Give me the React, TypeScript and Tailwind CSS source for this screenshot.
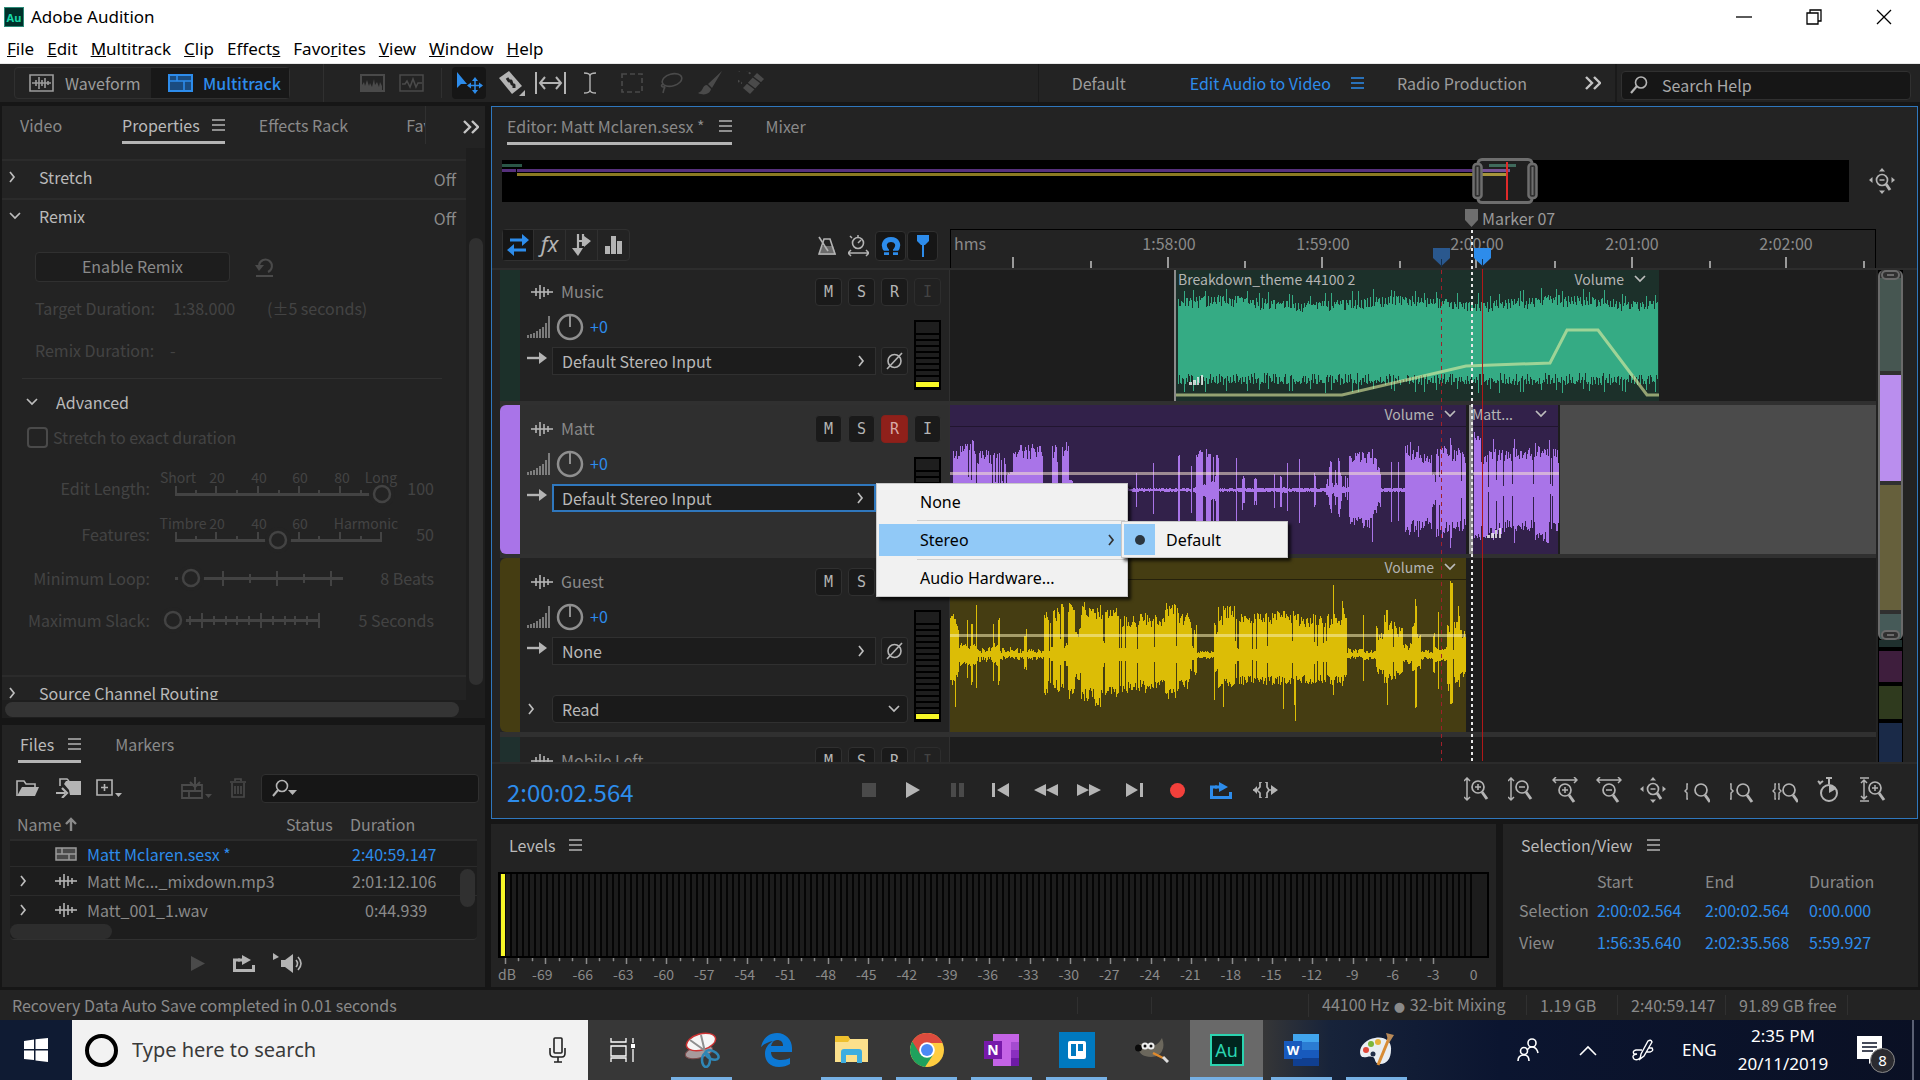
import React from "react";

type Seg = [number, number, number, number, number?, number?];

function rng(seed: number) {
  let s = seed;
  return () => {
    s = (s * 1664525 + 1013904223) % 4294967296;
    return s / 4294967296;
  };
}

/* Builds one vertical stroke per pixel column. A segment is
   [from, to, peak above, peak below, jitter, share of quiet columns]. */
function wavePath(segs: Seg[], mid: number, seed: number) {
  const r = rng(seed);
  let d = "";
  for (const [from, to, up, down, jitter = 0.3, gaps = 0] of segs) {
    for (let x = from; x < to; x++) {
      const quiet = r() < gaps;
      const k = quiet ? 0.15 + r() * 0.2 : 1;
      const a = Math.max(1, Math.round(up * k * (1 - r() * jitter)));
      const b = Math.max(1, Math.round(down * k * (1 - r() * jitter)));
      d += `M${x} ${mid - a}h1v${a + b}h-1z`;
    }
  }
  return d;
}

const violetSegs: Seg[] = [
  [0, 3, 3, 3], [3, 10, 40, 38], [10, 11, 58, 50], [11, 22, 47, 42, 0.2, 0.12], [22, 23, 58, 50], [23, 26, 50, 44],
  [27, 46, 42, 38, 0.4, 0.1], [46, 57, 40, 34, 0.5, 0.15], [57, 63, 20, 20], [63, 64, 52, 48], [64, 70, 42, 38], [70, 71, 56, 50],
  [71, 93, 47, 42, 0.35, 0.06], [93, 102, 2, 2], [102, 106, 45, 40], [106, 107, 57, 48], [107, 108, 40, 40], [109, 112, 3, 3],
  [112, 119, 48, 40], [119, 123, 12, 12], [123, 186, 2, 2, 0.6], [186, 187, 22, 24], [187, 203, 2, 2, 0.6], [203, 204, 28, 26],
  [204, 228, 2, 2, 0.6], [228, 230, 37, 32, 0.1], [230, 241, 2, 2, 0.6], [241, 242, 25, 25], [243, 246, 3, 3],
  [246, 253, 41, 40, 0.2, 0.08], [253, 256, 6, 8], [256, 269, 42, 40, 0.25, 0.08], [269, 286, 2, 2, 0.6], [286, 287, 37, 36],
  [287, 292, 2, 2], [292, 295, 18, 20, 0.4], [295, 304, 2, 2], [304, 307, 15, 17, 0.4], [307, 324, 2, 2], [324, 325, 22, 22],
  [325, 330, 2, 2], [330, 332, 17, 17], [332, 337, 3, 3], [337, 338, 28, 26], [338, 349, 2, 2], [349, 350, 43, 33],
  [350, 364, 2, 2], [364, 366, 18, 18], [366, 376, 2, 2], [376, 391, 32, 28, 0.5, 0.5], [391, 398, 16, 14, 0.5, 0.6],
  [398, 399, 3, 3], [399, 422, 39, 38, 0.3], [422, 423, 49, 63], [423, 427, 36, 28], [427, 431, 24, 20, 0.4],
  [431, 441, 2, 2], [441, 442, 30, 36], [442, 448, 2, 2], [448, 449, 33, 35], [449, 455, 2, 2], [455, 460, 46, 48],
  [460, 461, 50, 51], [461, 468, 40, 42, 0.3, 0.1], [468, 469, 50, 56], [469, 482, 37, 40, 0.3, 0.15], [482, 485, 18, 20],
  [485, 494, 42, 48, 0.2, 0.1], [494, 500, 46, 44, 0.3], [500, 502, 56, 63], [502, 516, 42, 42, 0.35, 0.08],
];

const violetTailSegs: Seg[] = [
  [1, 8, 58, 50, 0.15], [8, 15, 36, 48, 0.3], [15, 16, 3, 3], [16, 20, 42, 48], [20, 21, 60, 62], [21, 28, 42, 46, 0.3, 0.1],
  [28, 41, 44, 46, 0.35, 0.06], [41, 42, 62, 62], [42, 62, 43, 42, 0.3, 0.08], [62, 63, 58, 60], [63, 76, 44, 56, 0.25, 0.05],
  [76, 77, 54, 44], [77, 86, 42, 42, 0.4, 0.12],
];

const amberSegs: Seg[] = [
  [0, 5, 42, 30, 0.2], [5, 6, 38, 58], [6, 9, 36, 28, 0.5], [9, 17, 13, 13, 0.5], [17, 18, 36, 30], [18, 21, 12, 12, 0.5],
  [21, 24, 36, 32, 0.3, 0.3], [24, 26, 12, 12], [26, 27, 53, 42], [27, 43, 8, 7, 0.8], [43, 44, 43, 36], [44, 48, 12, 12, 0.4],
  [48, 50, 42, 32], [50, 74, 8, 5, 0.8], [74, 76, 24, 16], [76, 77, 34, 20], [77, 94, 6, 5, 0.7], [94, 98, 44, 42, 0.2],
  [98, 103, 42, 30, 0.4, 0.3], [103, 107, 46, 34, 0.3], [107, 114, 52, 38, 0.3, 0.1], [114, 118, 12, 12, 0.6],
  [118, 125, 54, 44, 0.25], [125, 131, 30, 25, 0.4], [131, 145, 54, 46, 0.3, 0.1], [145, 146, 52, 70], [146, 150, 50, 50],
  [150, 151, 60, 58], [151, 165, 48, 42, 0.25, 0.12], [165, 170, 50, 44, 0.3, 0.2], [170, 197, 42, 38, 0.35, 0.1],
  [197, 215, 40, 34, 0.3, 0.06], [215, 228, 52, 44, 0.25, 0.08], [228, 240, 42, 34, 0.3, 0.05], [240, 247, 34, 22, 0.4, 0.1],
  [247, 264, 4, 4, 0.6], [264, 265, 44, 52], [265, 268, 30, 20], [268, 269, 64, 34], [269, 273, 40, 36], [273, 274, 62, 52],
  [274, 287, 50, 32, 0.3, 0.08], [287, 289, 8, 8], [289, 310, 42, 30, 0.3, 0.14], [310, 333, 44, 30, 0.3, 0.08],
  [333, 334, 46, 56], [334, 344, 46, 30, 0.3, 0.15], [344, 346, 54, 68], [346, 383, 42, 30, 0.35, 0.12], [383, 384, 75, 48],
  [384, 392, 42, 30, 0.3, 0.1], [392, 394, 54, 32], [394, 397, 44, 26], [397, 413, 7, 4, 0.7], [413, 414, 50, 34],
  [414, 426, 5, 5, 0.7], [426, 431, 34, 20, 0.6, 0.4], [431, 434, 22, 20], [434, 437, 46, 30], [437, 438, 52, 65],
  [438, 446, 34, 26, 0.3, 0.1], [446, 453, 28, 22, 0.4], [453, 462, 12, 9, 0.6], [462, 465, 36, 20, 0.4], [465, 467, 70, 56],
  [467, 471, 22, 14, 0.4], [471, 483, 5, 5, 0.6], [483, 485, 24, 18], [485, 488, 8, 8], [488, 489, 44, 38],
  [489, 497, 8, 7, 0.4], [497, 500, 30, 36], [500, 503, 75, 50, 0.05], [503, 508, 34, 30, 0.4, 0.1], [508, 510, 52, 36],
  [510, 516, 26, 22, 0.5],
];

/* Dense music bed: slow swell with a single taller column now and then. */
const greenSegs: Seg[] = Array.from({ length: 160 }, (_, i): Seg[] => {
  const x = 2 + i * 3;
  const swell = Math.round(3 * Math.sin(i / 9));
  const loud = i % 7 === 2 || i % 11 === 5;
  return [[x, x + 1, (loud ? 53 : 45) + swell, loud ? 50 : 42, 0.08], [x + 1, x + 3, 45 + swell, 41, 0.26]];
}).flat();

/* ---------- icons ---------- */

type IconProps = { w: number; h: number; className?: string; box?: string; children: React.ReactNode };
function Icon({ w, h, className = "", box, children }: IconProps) {
  return (
    <svg width={w} height={h} viewBox={box ?? `0 0 ${w} ${h}`} className={"shrink-0 " + className} fill="none" stroke="currentColor" strokeWidth="2" aria-hidden="true">
      {children}
    </svg>
  );
}

const Burger = ({ className = "text-[#b4b4b4]" }: { className?: string }) => (
  <Icon w={13} h={12} className={className}><path d="M0 1h13M0 6h13M0 11h13" strokeWidth="1.700" /></Icon>
);
const Chevrons = () => (
  <Icon w={16} h={14} className="text-[#c4c4c4]"><path d="M1 1l6 6-6 6M9 1l6 6-6 6" strokeWidth="2.4" /></Icon>
);
const Right = ({ className = "text-[#bdbdbd]" }: { className?: string }) => (
  <Icon w={7} h={12} className={className}><path d="M1 1l4 5-4 5" strokeWidth="1.7" /></Icon>
);
const Down = ({ className = "text-[#bdbdbd]" }: { className?: string }) => (
  <Icon w={12} h={8} className={className}><path d="M1 1l5 5 5-5" strokeWidth="1.7" /></Icon>
);
const WaveGlyph = ({ className = "text-[#b4b4b4]" }: { className?: string }) => (
  <Icon w={22} h={14} className={className}><path d="M0 7h22" strokeWidth="1.600" /><path d="M5 3v8M9 0v14M13 2v10M17 4v6" strokeWidth="1.600" /></Icon>
);
const Glass = () => <><circle cx="14" cy="10" r="6" strokeWidth="1.7" /><path d="M18 15l5 7" strokeWidth="3" /></>;

const ZoomAll = () => (
  <Icon w={26} h={26} className="text-[#b4b4b4]">
    <circle cx="13" cy="12" r="5.5" strokeWidth="1.7" /><path d="M10.500 12h5" strokeWidth="1.5" /><path d="M17 16l4 6" strokeWidth="3" />
    <path d="M13 0l3 3.500h-6zM13 26l3-3.500h-6zM0 12l3.500-3v6zM26 12l-3.500-3v6z" fill="currentColor" stroke="none" />
  </Icon>
);

const zoomIcons: { label: string; el: React.ReactNode }[] = [
  { label: "Zoom in amplitude", el: <><path d="M3 1v22M0 4l3-3 3 3M0 20l3 3 3-3" strokeWidth="1.500" /><Glass /><path d="M11 10h6M14 7v6" strokeWidth="1.500" /></> },
  { label: "Zoom out amplitude", el: <><path d="M3 1v22M0 4l3-3 3 3M0 20l3 3 3-3" strokeWidth="1.500" /><Glass /><path d="M11 10h6" strokeWidth="1.500" /></> },
  { label: "Zoom in time", el: <><path d="M1 3h24M4 0L1 3l3 3M22 0l3 3-3 3" strokeWidth="1.500" /><g transform="translate(-1 3)"><Glass /><path d="M11 10h6M14 7v6" strokeWidth="1.500" /></g></> },
  { label: "Zoom out time", el: <><path d="M1 3h24M4 0L1 3l3 3M22 0l3 3-3 3" strokeWidth="1.500" /><g transform="translate(-1 3)"><Glass /><path d="M11 10h6" strokeWidth="1.500" /></g></> },
  { label: "Zoom out full", el: <><circle cx="13" cy="12" r="5.5" strokeWidth="1.7" /><path d="M10.500 12h5" strokeWidth="1.500" /><path d="M17 16l4 6" strokeWidth="3" /><path d="M13 0l3 3.500h-6zM13 26l3-3.500h-6zM0 12l3.500-3v6zM26 12l-3.500-3v6z" fill="currentColor" stroke="none" /></> },
  { label: "Zoom to in point", el: <><path d="M4 7H3v5l-2 2 2 2v6h1" strokeWidth="1.500" /><g transform="translate(3 3)"><Glass /></g></> },
  { label: "Zoom to out point", el: <><path d="M2 7h1v5l2 2-2 2v6H2" strokeWidth="1.500" /><g transform="translate(1 3)"><Glass /></g></> },
  { label: "Zoom to selection", el: <><path d="M4 7H3v5l-2 2 2 2v6h1M6 7h1v5l2 2-2 2v6H6" strokeWidth="1.400" /><g transform="translate(3 3)"><Glass /></g></> },
  { label: "Zoom duration", el: <><circle cx="13" cy="16" r="8" strokeWidth="2" /><path d="M13 7V2M10 1h6M5 7L2 4M3 7l4-3" /><path d="M13 16V8a8 8 0 0 1 7 4z" fill="currentColor" stroke="none" /></> },
  { label: "Zoom all tracks", el: <><path d="M0 1h9M0 24h9M4 3v19M1 6l3-3 3 3M1 19l3 3 3-3" strokeWidth="1.500" /><g transform="translate(1 1)"><Glass /><path d="M11 10h6M14 7v6" strokeWidth="1.500" /></g></> },
];

/* ---------- window title, menu and tools ---------- */

function TitleBar() {
  return (
    <header className="bg-white text-black font-['Noto_Sans',sans-serif]">
      <div className="flex h-[34px] items-center pl-1">
        <span className="flex h-5 w-5 items-center justify-center bg-[#00302a] border border-[#2b8b78] text-[11px] font-bold leading-none text-[#19d8a7]">Au</span>
        <h1 className="ml-[7px] text-[17px] leading-6">Adobe Audition</h1>
        <div className="ml-auto flex items-center gap-[54px] pr-[28px]">
          <button aria-label="Minimize"><Icon w={16} h={16}><path d="M0 8h16" strokeWidth="1.300" /></Icon></button>
          <button aria-label="Restore"><Icon w={16} h={16}><path d="M1 4h11v11H1zM4 4V1h11v11h-3" strokeWidth="1.300" /></Icon></button>
          <button aria-label="Close"><Icon w={16} h={16}><path d="M1 1l14 14M15 1L1 15" strokeWidth="1.300" /></Icon></button>
        </div>
      </div>
      <nav className="flex h-[30px] items-center gap-[13px] border-b border-[#e8e8e8] pl-[7px] text-[17px] leading-6">
        <button><u>F</u>ile</button>
        <button><u>E</u>dit</button>
        <button><u>M</u>ultitrack</button>
        <button><u>C</u>lip</button>
        <button>Effect<u>s</u></button>
        <button>Favo<u>r</u>ites</button>
        <button><u>V</u>iew</button>
        <button><u>W</u>indow</button>
        <button><u>H</u>elp</button>
      </nav>
    </header>
  );
}

function Toolbar() {
  return (
    <div className="flex h-[38px] shrink-0 items-center bg-[#232323] pl-[14px] pr-[9px]">
      <div className="flex h-8 items-center rounded-sm border border-[#303030]">
        <button className="flex h-full w-[136px] items-center gap-[11px] pl-[14px] text-[#9c9c9c]">
          <Icon w={25} h={18}><path d="M1 1h23v16H1zM3 9h19M7 6v6M10 3v12M13 6v6M16 4v10M19 7v4" strokeWidth="1.6" /></Icon>
          Waveform
        </button>
        <button className="flex h-full w-[138px] items-center gap-[10px] bg-[#181818] pl-[17px] font-medium text-[#2d8ceb]">
          <Icon w={25} h={18}><path d="M1 1h23v16H1z" fill="#1a4c80" /><path d="M1 7h23M9 1v6M16 7v10" strokeWidth="1.6" /></Icon>
          Multitrack
        </button>
      </div>
      <div className="ml-[33px] h-full w-px bg-[#303030]" />
      <div className="ml-[36px] flex items-center gap-[14px] text-[#4a4a4a]">
        <Icon w={25} h={18}><path d="M1 1h23v16H1z" /><path d="M2 16V11l2-3 1 4 2-6 2 6 1-3 2 4 2-8 1 6 2-3 2 5 1-5 2 4v4z" fill="currentColor" stroke="none" /></Icon>
        <Icon w={25} h={18}><path d="M1 1h23v16H1z" strokeWidth="1.500" /><path d="M3 10h3l2-3 3 6 3-8 3 8 2-4h4" strokeWidth="1.600" /></Icon>
      </div>
      <div className="ml-[17px] h-[30px] w-px bg-[#303030]" />
      <button aria-label="Move tool" className="ml-[10px] flex h-8 w-[34px] items-center justify-center rounded-sm bg-[#161616] text-[#2d8ceb]">
        <Icon w={27} h={24}><path d="M1 1v16l4-4 6 0z" fill="currentColor" stroke="none" /><path d="M19 8v13M12.500 14.500h13" strokeWidth="1.500" /><path d="M19 6l3 4h-6zM19 23l3-4h-6zM11 14.500l4-3v6zM27 14.500l-4-3v6z" fill="currentColor" stroke="none" /></Icon>
      </button>
      <div className="ml-3 flex items-center text-[#b4b4b4]">
        <button aria-label="Razor tool"><Icon w={27} h={26}><path d="M1 8l10-7 13 15-10 8z" fill="currentColor" stroke="none" /><path d="M9 8l2 3 2 0 1 3 2 1 0 3" stroke="#232323" strokeWidth="3" strokeLinejoin="round" /><path d="M27 20v6h-6z" fill="currentColor" stroke="none" /></Icon></button>
        <button aria-label="Slip tool" className="ml-[10px]"><Icon w={31} h={22}><path d="M1 0v22M30 0v22" /><path d="M5 11h21M10 5l-5 6 5 6M21 5l5 6-5 6" /></Icon></button>
        <button aria-label="Time selection tool" className="ml-[18px]"><Icon w={12} h={22}><path d="M0 1q6 0 6 3v14q0 3-6 3M12 1q-6 0-6 3v14q0 3 6 3" strokeWidth="1.400" /></Icon></button>
      </div>
      <div className="ml-[25px] flex items-center gap-[15px] text-[#4a4a4a]">
        <Icon w={22} h={20}><path d="M1 1h20v18H1z" strokeDasharray="5 3" strokeWidth="1.600" /></Icon>
        <Icon w={25} h={22}><ellipse cx="14" cy="8" rx="10" ry="6" transform="rotate(-15 14 8)" strokeWidth="1.600" /><path d="M5 12q-3 2 0 3 3-1 1 2l-1 4" strokeWidth="1.600" /></Icon>
        <Icon w={25} h={24}><path d="M24 0L10 13l4 4L24 0zM9 14c-5 0-3 6-9 8 6 3 12 1 13-4z" fill="currentColor" stroke="none" /></Icon>
        <Icon w={27} h={24}><path d="M5 17L19 2l7 6-14 15z" fill="currentColor" stroke="none" /><path d="M9 12l8 6M15 6l8 6" stroke="#232323" strokeWidth="1.500" /><path d="M12 3A7 7 0 1 0 4 12" strokeDasharray="2 2" /></Icon>
      </div>
      <div className="ml-auto flex h-full items-center border-l border-[#1a1a1a] pl-[33px] text-[#9c9c9c]">
        <button className="w-[118px] text-left">Default</button>
        <button className="text-[#2d8ceb]">Edit Audio to Video</button>
        <button aria-label="Workspace menu" className="ml-[20px]"><Burger className="text-[#2d8ceb]" /></button>
        <button className="ml-[33px]">Radio Production</button>
        <button aria-label="More workspaces" className="ml-[58px]"><Chevrons /></button>
      </div>
      <div className="ml-[14px] h-full w-[2px] bg-[#1a1a1a]" />
      <label className="mt-1 ml-1 flex h-[29px] w-[290px] items-center gap-[14px] rounded-sm border border-[#303030] bg-[#161616] pl-2">
        <Icon w={18} h={18} className="text-[#b4b4b4]"><circle cx="11" cy="6.500" r="5.500" strokeWidth="1.600" /><path d="M7 10l-6 7" strokeWidth="2.200" /></Icon>
        <input aria-label="Search Help" placeholder="Search Help" className="w-full bg-transparent outline-none placeholder:text-[#a8a8a8]" />
      </label>
    </div>
  );
}

/* ---------- properties panel ---------- */

type SliderProps = { label: string; value: string; width: number; pos: number; major: number[]; minor: number[]; names?: [string, number][]; pad?: string; cross?: boolean };
function Slider({ label, value, width, pos, major, minor, names, pad = "ml-[25px]", cross }: SliderProps) {
  return (
    <label className="flex h-[42px] items-center">
      <span className="w-[148px] text-right">{label}</span>
      <span className={"relative flex h-[42px] items-center " + pad}>
        <svg width={width + 10} height="42" className="overflow-visible" fill="none" stroke="#434343" aria-hidden="true">
          <path d={`M0 ${names ? 27.5 : 21.5}h${width}`} strokeWidth="3" />
          {major.map((x) => <path key={x} d={cross ? `M${x} 14v15` : `M${x} 19v9`} strokeWidth="2" />)}
          {minor.map((x) => <path key={x} d={cross ? `M${x} 17v9` : `M${x} 23v4`} strokeWidth="2" />)}
          <circle cx={pos} cy={names ? 27 : 21} r="13" fill="#232323" stroke="none" />
          {names?.map(([t, x]) => <text key={t} x={x} y="16" textAnchor="middle" fontSize="14" fill="#434343" stroke="none">{t}</text>)}
          <circle cx={pos} cy={names ? 27 : 21} r="8" strokeWidth="2.500" />
        </svg>
        <input type="range" disabled min="0" max={width} defaultValue={pos} className="absolute inset-0 w-full opacity-0" />
      </span>
      <span className="ml-auto text-right">{value}</span>
    </label>
  );
}

function Tab({ children, className = "" }: { children: React.ReactNode; className?: string }) {
  return <button className={"flex h-[38px] shrink-0 items-center border-b-3 border-transparent pt-[3px] whitespace-nowrap " + className}>{children}</button>;
}

function Section({ title, open, off, className = "" }: { title: string; open?: boolean; off?: boolean; className?: string }) {
  return (
    <div className={"flex shrink-0 items-start border-t-2 border-[#2b2b2b] pt-[4px] pl-[7px] pr-[10px] leading-6 " + className}>
      <span className="flex h-6 w-[30px] items-center">{open ? <Down /> : <Right />}</span>
      <span className="text-[#bababa]">{title}</span>
      {off && <span className="ml-auto pt-[2px] text-[#8a8a8a]">Off</span>}
    </div>
  );
}

function Properties() {
  return (
    <section className="relative flex h-[612px] shrink-0 flex-col overflow-hidden bg-[#232323]">
      <div className="flex h-[42px] shrink-0 items-start pl-[18px] text-[#8a8a8a]">
        <Tab>Video</Tab>
        <Tab className="ml-[60px] gap-3 border-b-[#b4b4b4]! text-[#bababa]">Properties <Burger /></Tab>
        <Tab className="ml-[34px]">Effects Rack</Tab>
        <div className="ml-[58px] w-5 shrink-0 overflow-hidden border-r border-[#303030]"><Tab>Favorites</Tab></div>
        <button aria-label="More panels" className="mt-[14px] ml-[37px]"><Chevrons /></button>
      </div>
      <div className="flex min-h-0 flex-1">
        <div className="flex min-w-0 flex-1 flex-col overflow-hidden">
          <div className="h-[11px] shrink-0" />
          <Section title="Stretch" off className="h-[39px]" />
          <Section title="Remix" open off className="h-[41px]" />
          <div className="shrink-0 pl-[33px] pr-[31px] text-[#434343]">
            <div className="flex items-center pt-[13px]">
              <button className="h-[30px] w-[195px] rounded-sm border border-[#303030] bg-[#1d1d1d] pb-[2px] text-[#8a8a8a]">Enable Remix</button>
              <Icon w={20} h={20} className="ml-[25px] text-[#4a4a4a]"><path d="M4 8a6.500 6.500 0 1 1 9 7M1 19h17" /><path d="M0 8h9l-5 6z" fill="currentColor" stroke="none" /></Icon>
            </div>
            <div className="mt-[5px] flex h-[42px] items-center"><span className="w-[138px]">Target Duration:</span><span className="w-[94px]">1:38.000</span><span>(±5 seconds)</span></div>
            <div className="flex h-[42px] items-center"><span className="w-[135px]">Remix Duration:</span><span>-</span></div>
          </div>
          <div className="ml-5 mr-6 mt-[7px] shrink-0 border-t border-[#303030] text-[#434343]">
            <div className="mt-[11px] flex h-6 items-center gap-[18px] pl-1 text-[#bababa]"><Down /> Advanced</div>
            <label className="mt-[11px] flex h-6 items-center gap-[5px] pl-[5px]">
              <input type="checkbox" disabled className="h-[21px] w-[21px] appearance-none rounded-sm border-2 border-[#4a4a4a]" />
              Stretch to exact duration
            </label>
          </div>
          <div className="mt-[18px] shrink-0 pr-[32px] text-[#434343]">
            <Slider label="Edit Length:" value="100" width={207} pos={207} major={[1, 41, 83, 124, 165]} minor={[21, 62, 104, 144, 186]} names={[["Short", 3], ["20", 42], ["40", 84], ["60", 125], ["80", 167], ["Long", 206]]} />
            <div className="h-[4px]" />
            <Slider label="Features:" value="50" width={207} pos={103} major={[1, 41, 83, 124, 165, 206]} minor={[21, 62, 144, 186]} names={[["Timbre", 8], ["20", 42], ["40", 84], ["60", 125], ["Harmonic", 191]]} />
            <div className="h-[2px]" />
            <Slider label="Minimum Loop:" value="8 Beats" width={168} pos={16} major={[48, 102, 156]} minor={[75, 129]} cross />
            <Slider label="Maximum Slack:" value="5 Seconds" width={146} pos={0} major={[29, 88, 146]} minor={[17, 41, 53, 64, 76, 100, 112, 122, 134]} pad="ml-[23px]" cross />
          </div>
          <Section title="Source Channel Routing" className="mt-[34px] h-[38px]" />
        </div>
        <div className="w-[19px] bg-[#1e1e1e] pt-[90px]"><div className="ml-[3px] h-[447px] w-[14px] rounded-full bg-[#303030]" /></div>
      </div>
      <div className="h-[18px] shrink-0 bg-[#1e1e1e] pl-[3px] pt-[2px]"><div className="h-[15px] w-[454px] rounded-full bg-[#343434]" /></div>
    </section>
  );
}

/* ---------- files panel ---------- */

const SessionIcon = () => (
  <Icon w={22} h={14} className="text-[#9a9a9a]"><path d="M1 1h20v12H1z" fill="#4a4a4a" strokeWidth="1.500" /><path d="M1 7h20M7 1v6M14 7v6" strokeWidth="1.500" /></Icon>
);

function Files() {
  return (
    <section className="flex h-[262px] shrink-0 flex-col bg-[#232323] px-2">
      <div className="flex h-[39px] items-start pl-2 text-[#8a8a8a]">
        <Tab className="gap-[14px] border-b-[#b4b4b4]! pl-[2px] text-[#bababa]">Files <Burger /></Tab>
        <Tab className="ml-[34px]">Markers</Tab>
      </div>
      <div className="-mr-[2px] flex h-[48px] items-center pl-[6px] text-[#b4b4b4]">
        <button aria-label="Open file"><Icon w={23} h={17}><path d="M1 16V1h7l2 3h9v4" strokeWidth="1.600" /><path d="M1 16L6 7h17l-4 9z" fill="currentColor" stroke="none" /></Icon></button>
        <button aria-label="Import file" className="ml-[17px]"><Icon w={25} h={20}><path d="M4 8V1h7l2 2" strokeWidth="1.600" /><path d="M10 3h15v14H14l-1-5-5-6z" fill="currentColor" stroke="none" /><path d="M0 15h9M6 10l5 5-5 5" strokeWidth="2.200" /></Icon></button>
        <button aria-label="New file" className="ml-[15px]"><Icon w={26} h={19}><path d="M1 1h15v15H1zM8.500 5v7M5 8.500h7" strokeWidth="1.600" /><path d="M19 14h7l-3.500 4z" fill="currentColor" stroke="none" /></Icon></button>
        <button aria-label="Insert into multitrack" className="ml-[59px] text-[#4a4a4a]"><Icon w={31} h={22}><path d="M1 8h20v13H1zM1 14h20M8 14v7M14 8v6" strokeWidth="1.800" /><path d="M14 0v8M9 5l5 5 5-5" /><path d="M24 17h7l-3.500 4z" fill="currentColor" stroke="none" /></Icon></button>
        <button aria-label="Delete" className="ml-[18px] text-[#4a4a4a]"><Icon w={16} h={20}><path d="M0 4h16M5 3V1h6v2M2 5v14h12V5M5 8v8M8 8v8M11 8v8" strokeWidth="1.600" /></Icon></button>
        <label className="ml-[15px] flex h-[29px] flex-1 items-center rounded-sm border border-[#303030] bg-[#161616] pl-[10px]">
          <Icon w={25} h={18}><circle cx="10" cy="7" r="5.500" strokeWidth="1.600" /><path d="M6 11l-5 6" /><path d="M16 11h9l-4.500 5z" fill="currentColor" stroke="none" /></Icon>
          <input aria-label="Search files" className="w-full bg-transparent outline-none" />
        </label>
      </div>
      <div className="relative h-[127px]">
        <table className="w-full table-fixed border-separate border-spacing-0 text-[#8a8a8a]">
          <colgroup><col className="w-[76px]" /><col /><col className="w-[63px]" /><col className="w-[133px]" /></colgroup>
          <thead>
            <tr className="h-[27px] text-left">
              <th colSpan={2} className="pb-[3px] pl-[7px] font-normal"><span className="flex items-center gap-1">Name <Icon w={12} h={14}><path d="M6 14V2M1 7l5-5 5 5" strokeWidth="2.400" /></Icon></span></th>
              <th className="pb-[3px] pl-[5px] font-normal">Status</th>
              <th className="pb-[3px] pl-[6px] font-normal">Duration</th>
            </tr>
          </thead>
          <tbody className="bg-[#1d1d1d]">
            <tr className="h-[28px] text-[#2d8ceb]">
              <td className="border-t-2 border-b border-[#2b2b2b]"><span className="flex pl-[45px]"><SessionIcon /></span></td>
              <td colSpan={2} className="border-t-2 border-b border-[#2b2b2b] pl-px">Matt Mclaren.sesx *</td>
              <td className="border-t-2 border-b border-[#2b2b2b] pl-2">2:40:59.147</td>
            </tr>
            <tr className="h-[29px]">
              <td className="border-b border-[#2b2b2b]"><span className="flex items-center gap-[28px] pl-[10px]"><Right /><WaveGlyph /></span></td>
              <td colSpan={2} className="border-b border-[#2b2b2b] pl-px">Matt Mc..._mixdown.mp3</td>
              <td className="border-b border-[#2b2b2b] pl-2">2:01:12.106</td>
            </tr>
            <tr className="h-[28px]">
              <td><span className="flex items-center gap-[28px] pl-[10px]"><Right /><WaveGlyph /></span></td>
              <td colSpan={2} className="pl-px">Matt_001_1.wav</td>
              <td className="pl-[21px]">0:44.939</td>
            </tr>
          </tbody>
        </table>
        <div className="h-[16px] rounded-b-sm border-b border-[#303030] bg-[#1d1d1d]"><div className="h-[15px] w-[102px] rounded-full bg-[#2d2d2d]" /></div>
        <div className="absolute right-[2px] top-[57px] h-[38px] w-[15px] rounded-full bg-[#303030]" />
      </div>
      <div className="flex flex-1 items-center pl-[181px] text-[#b4b4b4]">
        <button aria-label="Play" className="text-[#4a4a4a]"><Icon w={14} h={15}><path d="M0 0l14 7.500L0 15z" fill="currentColor" stroke="none" /></Icon></button>
        <button aria-label="Loop playback" className="ml-[28px]"><Icon w={22} h={17}><path d="M7 5H1.500v10.500h19V10" strokeWidth="3" /><path d="M9 0l9 5-9 5z" fill="currentColor" stroke="none" /><path d="M5 5h7" strokeWidth="3" /></Icon></button>
        <button aria-label="Auto-play" className="ml-[18px]"><Icon w={32} h={20}><path d="M0 0l6 4-6 3zM8 7h4l8-6v19l-8-6H8z" fill="currentColor" stroke="none" /><path d="M23 7q3 3.500 0 7M25 4q6 6.500 0 13" strokeWidth="1.600" /></Icon></button>
      </div>
    </section>
  );
}

/* ---------- editor ---------- */

function KeyBtn({ k, off, hot }: { k: string; off?: boolean; hot?: boolean }) {
  return (
    <button className={"h-[28px] w-[27px] rounded-[4px] border text-[15px] leading-none font-['DejaVu_Sans_Mono',monospace] " + (hot ? "border-[#86201b] bg-[#8f201a] text-[#d8a9a6]" : off ? "border-[#2d2d2d] bg-[#212121] text-[#434343]" : "border-[#303030] bg-[#1a1a1a] text-[#b4b4b4]")}>{k}</button>
  );
}

function Meter({ h, lit = true }: { h: number; lit?: boolean }) {
  const rows = Math.floor((h - 18) / 6);
  return (
    <svg width="27" height={h} aria-hidden="true">
      <path d={`M0 0h27v${h}H0z`} fill="#000" />
      <path d={`M2 2h23v11H2z` + Array.from({ length: rows }, (_, i) => `M2 ${15 + i * 6}h23v4H2z`).join("")} fill="#1e1e1e" />
      {lit && <path d={`M2 ${h - 8}h23v5H2z`} fill="#f7f727" />}
    </svg>
  );
}

type TrackProps = { name: string; stripe: string; input: string; height: string; meter: number; active?: boolean; read?: boolean; first?: boolean; phase?: boolean };
function TrackHeader({ name, stripe, input, height, meter, active, read, first, phase = true }: TrackProps) {
  return (
    <div className={"flex w-[450px] shrink-0 overflow-hidden border-r border-[#303030] " + height + (active ? " bg-[#2f2f2f]" : " bg-[#232323]")}>
      <div className={"w-[20px] shrink-0 " + stripe} />
      <div className={"flex-1 pl-[7px] pr-[8px] " + (first ? "pt-[8px]" : "pt-[10px]")}>
        <div className="flex h-[28px] items-center">
          <WaveGlyph className="ml-1 text-[#b4b4b4]" />
          <span className="ml-2 pb-[2px] text-[#8a8a8a]">{name}</span>
          <div className="ml-auto flex gap-[6px]">
            <KeyBtn k="M" /><KeyBtn k="S" /><KeyBtn k="R" hot={active} /><KeyBtn k="I" off={!active} />
          </div>
        </div>
        <div className="flex">
          <div className="flex-1">
            <div className="mt-[7px] flex h-[28px] items-center">
              <Icon w={24} h={22} className="text-[#a0a0a0]"><path d="M1 22v-3M4 22v-4M7 22v-5M10 22v-7M13 22v-9M16 22V11M19 22V7M22 22V0" strokeWidth="1.400" /></Icon>
              <Icon w={28} h={28} className="ml-[5px] text-[#8f8f8f]"><circle cx="14" cy="14" r="12" strokeWidth="2.500" /><path d="M14 3v11" /></Icon>
              <button className="ml-[6px] pb-[2px] text-[#2d8ceb]">+0</button>
            </div>
            <div className="mt-[6px] flex items-center">
              <Icon w={20} h={12} className="mb-[6px] text-[#b4b4b4]"><path d="M0 6h13" strokeWidth="2.400" /><path d="M12 0l8 6-8 6z" fill="currentColor" stroke="none" /></Icon>
              <button className={"ml-[5px] flex h-[28px] w-[324px] items-center justify-between border bg-[#1c1c1c] pr-[10px] pb-px text-[#b8b8b8] " + (active ? "border-2 border-[#2f77bd] pl-2" : "border-[#303030] pl-[9px]")}>{input}<Right /></button>
              {phase && <button aria-label="Phase" className="ml-[5px] flex h-[28px] w-[27px] items-center justify-center rounded-[3px] border border-[#303030] bg-[#1d1d1d]"><Icon w={17} h={18} className="text-[#b4b4b4]"><circle cx="8.500" cy="9" r="6.500" strokeWidth="1.600" /><path d="M1 17L16 1" strokeWidth="1.600" /></Icon></button>}
            </div>
            {read && (
              <div className="mt-[30px] flex items-center">
                <span className="ml-px w-[24px]"><Right /></span>
                <button className="flex h-[28px] w-[356px] items-center justify-between rounded-sm border border-[#303030] bg-[#1a1a1a] pr-[7px] pb-px pl-[9px] text-[#b8b8b8]">Read<Down /></button>
              </div>
            )}
          </div>
          <div className="mt-[14px]"><Meter h={meter} lit={!active} /></div>
        </div>
      </div>
    </div>
  );
}

const VolumeTag = ({ text = "Volume", gap = "gap-[10px]" }: { text?: string; gap?: string }) => (
  <button className={"flex items-center text-[14px] leading-[18px] text-[#b4b4b4] " + gap}>{text}<Down /></button>
);

const MiniBars = ({ x, y }: { x: number; y: number }) => (
  <path d={`M${x} ${y}v-3h3v3zM${x + 4} ${y}v-5h3v5zM${x + 8} ${y}v-8h2v8zM${x + 12} ${y}v-10h2v10z`} fill="#f2f2f2" opacity="0.8" />
);

const rulerLabels: [string, string][] = [["1:58:00", "left-[218px]"], ["1:59:00", "left-[372px]"], ["2:00:00", "left-[526px]"], ["2:01:00", "left-[681px]"], ["2:02:00", "left-[835px]"]];

function Ruler() {
  return (
    <div className="relative h-[39px] min-w-0 flex-1 border border-b-0 border-black text-[#8a8a8a]">
      <span className="absolute left-[3px] top-px">hms</span>
      {rulerLabels.map(([t, c]) => <span key={t} className={"absolute top-px w-0 " + c}><span className="flex w-0 justify-center whitespace-nowrap">{t}</span></span>)}
      <svg width="920" height="11" className="absolute bottom-0 left-0" aria-hidden="true">
        <path d="M62 0v11M217 0v11M371 0v11M525 0v11M681 0v11M835 0v11M140 4v7M294 4v7M449 4v7M604 4v7M759 4v7M913 4v7" stroke="#9a9a9a" strokeWidth="2" />
      </svg>
    </div>
  );
}

function Timeline() {
  return (
    <div className="relative flex min-w-0 flex-1 flex-col overflow-hidden bg-[#1d1d1d]">
      <div className="relative h-[131px] shrink-0">
        <div className="absolute left-[224px] top-0 h-[131px] w-[485px] border-l-2 border-[#8a8a8a] bg-[#1c302a]">
          <svg width="484" height="131" className="absolute left-0 top-0" aria-hidden="true">
            <path d={wavePath(greenSegs, 73, 11)} fill="#35ab84" />
            <path d="M0 125h166L290 96l84-3 17-33h31l49 65h12" fill="none" stroke="#e4f0a4" strokeOpacity="0.6" strokeWidth="3" />
            <MiniBars x={13} y={115} />
          </svg>
          <div className="relative flex justify-between pl-[2px] pr-[13px] text-[14px] leading-[18px] text-[#b4b4b4]"><span>Breakdown_theme 44100 2</span><VolumeTag /></div>
        </div>
      </div>
      <div className="h-[4px] shrink-0 bg-[#303030]" />
      <div className="relative h-[149px] shrink-0 bg-[#4b4b4b]">
        <div className="absolute left-0 top-0 h-[149px] w-[516px] bg-[#32214a]">
          <svg width="516" height="149" className="absolute left-0 top-0" aria-hidden="true">
            <path d="M0 21.500h516" stroke="#21152f" />
            <path d={wavePath(violetSegs, 85, 5)} fill="#a974e8" />
            <path d="M0 68.500h516" stroke="#f5e3cf" strokeOpacity="0.550" strokeWidth="3" />
          </svg>
          <div className="relative flex justify-end pr-[10px]"><VolumeTag /></div>
        </div>
        <div className="absolute left-[516px] top-0 h-[149px] w-[7px] border-l-3 border-[#1d1d1d] bg-[#8a8a8a]" />
        <div className="absolute left-[523px] top-0 h-[149px] w-[87px] border-r-2 border-[#1d1d1d] bg-[#32214a]">
          <svg width="86" height="149" className="absolute left-0 top-0" aria-hidden="true">
            <path d="M0 21.500h86" stroke="#21152f" />
            <path d={wavePath(violetTailSegs, 85, 8)} fill="#a974e8" />
            <path d="M0 68.500h86" stroke="#f5e3cf" strokeOpacity="0.550" strokeWidth="3" />
            <MiniBars x={14} y={133} />
          </svg>
          <div className="relative flex justify-end pr-[11px]"><VolumeTag text="Matt..." gap="gap-[22px]" /></div>
        </div>
      </div>
      <div className="h-[4px] shrink-0 bg-[#303030]" />
      <div className="relative h-[174px] shrink-0">
        <div className="absolute left-0 top-0 h-[174px] w-[516px] bg-[#453d12]">
          <svg width="516" height="174" className="absolute left-0 top-0" aria-hidden="true">
            <path d="M0 21.500h516" stroke="#25210b" />
            <path d={wavePath(amberSegs, 97, 3)} fill="#dcbd06" />
            <path d="M0 77.500h516" stroke="#f5ecb0" strokeOpacity="0.550" strokeWidth="3" />
          </svg>
          <div className="relative flex justify-end pr-[10px]"><VolumeTag /></div>
        </div>
      </div>
      <div className="h-[5px] shrink-0 bg-[#303030]" />
    </div>
  );
}

function InputMenu() {
  return (
    <div role="menu" className="absolute left-[384px] top-[376px] z-20 w-[252px] border border-[#c8c8c8] bg-[#f1f1f1] px-[2px] font-['Noto_Sans',sans-serif] text-[16px] leading-6 text-black shadow-[3px_3px_3px_rgba(0,0,0,0.7)]">
      <button role="menuitem" className="flex h-[36px] w-full items-center pl-[41px]">None</button>
      <div className="mb-[3px] ml-[38px] border-t border-[#cfcfcf]" />
      <button role="menuitem" className="flex h-[32px] w-full items-center justify-between bg-[#91c9f7] pl-[41px] pr-[10px]">Stereo<Right className="text-[#333]" /></button>
      <div className="mt-[3px] ml-[38px] border-t border-[#cfcfcf]" />
      <button role="menuitem" className="flex h-[36px] w-full items-center pl-[41px]">Audio Hardware...</button>
      <div role="menu" className="absolute left-[244px] top-[37px] w-[167px] border border-[#c8c8c8] bg-[#f1f1f1] p-[2px] shadow-[3px_3px_3px_rgba(0,0,0,0.7)]">
        <button role="menuitemradio" aria-checked="true" className="flex h-[31px] w-full items-center gap-[11px]">
          <span className="flex h-full w-[31px] items-center justify-center bg-[#91c9f7]"><span className="h-[10px] w-[10px] rounded-full bg-[#2b3640]" /></span>Default
        </button>
      </div>
    </div>
  );
}

function TrackScroll() {
  return (
    <div className="ml-[2px] flex w-[25px] shrink-0 flex-col bg-black">
      <div className="relative flex flex-col gap-[4px] rounded-md border-x-2 border-[#6a6a6a] bg-[#303030] pt-[8px] pb-px">
        <div className="h-[93px] bg-[#465651]" /><div className="h-[106px] bg-[#ba8eee]" /><div className="h-[125px] bg-[#66603c]" /><div className="h-[25px] bg-[#465a58]" />
        <div className="absolute top-0 right-0 left-0 mx-px h-[10px] rounded-md border-2 border-[#6a6a6a] bg-[#303030] px-1 pt-[2px]"><div className="h-[2px] bg-[#6a6a6a]" /></div>
        <div className="absolute right-0 bottom-0 left-0 mx-px h-[10px] rounded-md border-2 border-[#6a6a6a] bg-[#303030] px-1 pt-[2px]"><div className="h-[2px] bg-[#6a6a6a]" /></div>
      </div>
      <div className="mx-px h-[7px] bg-[#1f302e]" />
      <div className="mx-px mt-[4px] h-[31px] bg-[#3e1e3d]" />
      <div className="mx-px mt-[4px] h-[33px] bg-[#2f3a1e]" />
      <div className="mx-px mt-[4px] flex-1 bg-[#1a2a48]" />
    </div>
  );
}

function ToggleBtn({ label, on, children, className = "" }: { label: string; on?: boolean; children: React.ReactNode; className?: string }) {
  return <button aria-label={label} className={"flex h-[30px] w-[31px] items-center justify-center " + (on ? "bg-[#161616] text-[#2d8ceb] " : "text-[#b4b4b4] ") + className}>{children}</button>;
}

function Editor() {
  return (
    <section className="relative flex h-[713px] shrink-0 flex-col border border-[#2f77bd] bg-[#232323]">
      <div className="flex h-[53px] shrink-0 items-start pl-[15px] text-[#8a8a8a]">
        <Tab className="gap-[14px] border-b-[#b4b4b4]!">Editor: Matt Mclaren.sesx * <Burger /></Tab>
        <Tab className="ml-[34px]">Mixer</Tab>
      </div>
      <div className="flex h-[42px] shrink-0 items-center pl-[10px]">
        <div className="relative h-full min-w-0 flex-1 bg-black">
          <svg width="1348" height="42" className="absolute inset-0" aria-hidden="true">
            <path d="M0 4h20v3H0z" fill="#2a5646" /><path d="M0 9h14v3H0zM15 9h993v3H15z" fill="#56307c" /><path d="M15 13h990v3H15z" fill="#8c7a22" />
          </svg>
          <div className="absolute left-[970px] -top-[2px] h-[46px] w-[66px]">
            <svg width="66" height="46" aria-hidden="true">
              <rect x="6" y="1.500" width="54" height="43" rx="4" fill="#cfcfcf" fillOpacity="0.150" stroke="#6e6e6e" strokeWidth="3" />
              <path d="M17 6h27v3H17z" fill="#3f6a5c" /><path d="M10 11h28v3H10z" fill="#775396" /><path d="M10 15h25v3H10z" fill="#a8963c" />
              <path d="M35 4v38" stroke="#e02a2a" strokeWidth="2" />
              <rect x="1.500" y="6" width="8" height="34" rx="3" fill="#303030" stroke="#6e6e6e" strokeWidth="2.500" /><path d="M5.500 9v28" stroke="#6e6e6e" strokeWidth="2" />
              <rect x="56.500" y="6" width="8" height="34" rx="3" fill="#303030" stroke="#6e6e6e" strokeWidth="2.500" /><path d="M60.500 9v28" stroke="#6e6e6e" strokeWidth="2" />
            </svg>
          </div>
        </div>
        <button aria-label="Zoom out full" className="ml-[20px] mr-[22px]"><ZoomAll /></button>
      </div>
      <div className="flex h-[66px] shrink-0 items-end">
        <div className="flex h-[39px] w-[458px] items-start pl-[10px]">
          <div className="flex rounded-sm border border-[#303030]">
            <ToggleBtn label="Inputs and outputs" on className="border-r border-[#303030]"><Icon w={22} h={22}><path d="M3 6h14M5 16h14" strokeWidth="3" /><path d="M15 0l7 6-7 6zM7 10l-7 6 7 6z" fill="currentColor" stroke="none" /></Icon></ToggleBtn>
            <ToggleBtn label="Effects" className="w-[32px] border-r border-[#303030] pb-1 font-['Noto_Sans',sans-serif] text-[22px] italic">fx</ToggleBtn>
            <ToggleBtn label="Sends" className="w-[32px] border-r border-[#303030]"><Icon w={20} h={22}><path d="M6 0v16M11 0v12M6 7h7" strokeWidth="2.200" /><path d="M12 2l7 5-7 6zM0 14h11l-5 8z" fill="currentColor" stroke="none" /></Icon></ToggleBtn>
            <ToggleBtn label="EQ"><Icon w={17} h={18}><path d="M0 18v-8h5v8zM6 18V0h5v18zM12 18V5h5v13z" fill="currentColor" stroke="none" /></Icon></ToggleBtn>
          </div>
          <div className="ml-auto mr-[12px] mt-[2px] flex items-center">
            <Icon w={19} h={20} className="text-[#b4b4b4]"><path d="M6 3h6l5 15H1z" strokeWidth="1.600" /><path d="M4 10h11l3 9H1z" fill="currentColor" fillOpacity="0.500" stroke="none" /><path d="M1 1l9 14" strokeWidth="1.600" /></Icon>
            <Icon w={21} h={22} className="mr-[6px] ml-[11px] text-[#b4b4b4]"><circle cx="10" cy="8" r="5.500" strokeWidth="1.600" /><path d="M10 8l3-3M10 2V0M4 3L2 1M0 18h21M3 15l-3 3 3 3M18 15l3 3-3 3" strokeWidth="1.500" /></Icon>
            <ToggleBtn label="Snapping" on className="rounded-sm border border-[#303030]"><Icon w={20} h={20}><path d="M5.500 19v-4.500C1 9 4 3.500 10 3.500S19 9 14.500 14.500V19" strokeWidth="5" /><path d="M0 15.500h20" stroke="#161616" strokeWidth="1.500" /></Icon></ToggleBtn>
            <ToggleBtn label="Playhead follow" on className="ml-px rounded-sm border border-[#303030]"><Icon w={12} h={22}><path d="M0 0h12v6l-4 4H4L0 6zM5 8h2v14H5z" fill="currentColor" stroke="none" /></Icon></ToggleBtn>
          </div>
        </div>
        <Ruler />
        <div className="w-[41px]" />
      </div>
      <div className="flex h-[494px] shrink-0 border-t-2 border-[#2d2d2d] pl-[8px] pr-[14px]">
        <div className="flex w-[450px] shrink-0 flex-col overflow-hidden bg-[#303030]">
          <TrackHeader name="Music" stripe="bg-[#1c302a]" input="Default Stereo Input" height="h-[131px]" meter={70} first />
          <div className="h-[4px] shrink-0" />
          <TrackHeader name="Matt" stripe="bg-[#a974e8] rounded-l-md" input="Default Stereo Input" height="h-[149px]" meter={86} active phase={false} />
          <div className="h-[4px] shrink-0" />
          <TrackHeader name="Guest" stripe="bg-[#453d12] rounded-l-md" input="None" height="h-[174px]" meter={112} read />
          <div className="h-[5px] shrink-0" />
          <TrackHeader name="Mobile Left" stripe="bg-[#1f302e]" input="None" height="h-[40px]" meter={70} />
        </div>
        <Timeline />
        <TrackScroll />
      </div>
      <div className="flex min-h-0 flex-1 items-center border-t-2 border-[#2b2b2b] pr-[31px] pb-[2px] pl-[15px]">
        <div className="w-[355px] pt-1 text-[24px] leading-8 text-[#2d8ceb]">2:00:02.564</div>
        <div className="flex items-center text-[#b4b4b4]">
          <button aria-label="Stop" className="text-[#4a4a4a]"><Icon w={14} h={14}><path d="M0 0h14v14H0z" fill="currentColor" stroke="none" /></Icon></button>
          <button aria-label="Play" className="ml-[30px]"><Icon w={14} h={16}><path d="M0 0l14 8-14 8z" fill="currentColor" stroke="none" /></Icon></button>
          <button aria-label="Pause" className="ml-[31px] text-[#4a4a4a]"><Icon w={13} h={14}><path d="M0 0h5v14H0zM8 0h5v14H8z" fill="currentColor" stroke="none" /></Icon></button>
          <button aria-label="Previous" className="ml-[28px]"><Icon w={17} h={14}><path d="M0 0h3v14H0zM17 0v14L5 7z" fill="currentColor" stroke="none" /></Icon></button>
          <button aria-label="Rewind" className="ml-[25px]"><Icon w={24} h={12}><path d="M12 0v12L0 6zM24 0v12L12 6z" fill="currentColor" stroke="none" /></Icon></button>
          <button aria-label="Fast forward" className="ml-[19px]"><Icon w={24} h={12}><path d="M0 0l12 6-12 6zM12 0l12 6-12 6z" fill="currentColor" stroke="none" /></Icon></button>
          <button aria-label="Next" className="ml-[25px]"><Icon w={17} h={14}><path d="M14 0h3v14h-3zM0 0l12 7-12 7z" fill="currentColor" stroke="none" /></Icon></button>
          <button aria-label="Record" className="ml-[27px]"><span className="block h-[15px] w-[15px] rounded-full bg-[#f2403b]" /></button>
          <button aria-label="Loop" className="ml-[25px] text-[#2d8ceb]"><Icon w={22} h={17}><path d="M7 5H1.500v10.500h19V10" strokeWidth="3" /><path d="M9 0l9 5-9 5z" fill="currentColor" stroke="none" /><path d="M5 5h7" strokeWidth="3" /></Icon></button>
          <button aria-label="Skip selection" className="ml-[21px]"><Icon w={25} h={16}><path d="M9 0H7v5L4 8l3 3v5h2M0 8h4M12 0h2v5l2 3-2 3v5h-2M15 8h4" strokeWidth="1.700" /><path d="M4 4v8L0 8zM18 3l7 5-7 5z" fill="currentColor" stroke="none" /></Icon></button>
        </div>
        <div className="ml-auto flex items-center gap-[18px] text-[#b4b4b4]">
          {zoomIcons.map((z) => <button key={z.label} aria-label={z.label}><Icon w={26} h={26}>{z.el}</Icon></button>)}
        </div>
      </div>
      {/* marker, playheads and their guide lines lie over the ruler and the clips */}
      <svg width="60" height="562" className="pointer-events-none absolute left-[939px] top-[101px] z-10" aria-hidden="true">
        <path d="M34 1h13v11l-6.500 7L34 12z" fill="#6e6e6e" />
        <path d="M41 22v531" stroke="#e8e8e8" strokeWidth="2" strokeDasharray="3 3" />
        <path d="M2 40h17v10l-8.500 8L2 50z" fill="#2a588e" /><path d="M43 40h17v10l-8.500 8L43 50z" fill="#2d8ceb" />
        <path d="M10.500 51v8M51.500 51v8" stroke="#14304f" />
        <path d="M10.500 62v491" stroke="#a0202a" strokeWidth="1" strokeDasharray="4 4" />
        <path d="M51.500 61v492" stroke="#b01818" strokeWidth="1" />
      </svg>
      <span className="absolute left-[990px] top-[99px] text-[#9a9a9a]">Marker 07</span>
      <InputMenu />
    </section>
  );
}

/* ---------- levels, selection, status ---------- */

const levelMarks = Array.from({ length: 24 }, (_, i) => String(-69 + i * 3));
const levelTicks = Array.from({ length: 70 }, (_, i) => `M${Math.round(3 + i * 14.05)} 0h2v${(i % 3 ? 3 : 6)}h-2z`);

function Levels() {
  return (
    <section className="flex min-w-0 flex-1 flex-col bg-[#232323] pr-[2px] pl-[7px]">
      <h2 className="flex h-[48px] items-center gap-[13px] pb-[6px] pl-[11px] text-[#bababa]">Levels <Burger /></h2>
      <div className="mr-[5px] h-[86px] border-2 border-black">
        <svg width="100%" height="82" className="block" aria-hidden="true">
          <defs><pattern id="bars" width="6" height="86" patternUnits="userSpaceOnUse"><path d="M0 0h4v86H0z" fill="#1c1c1c" /><path d="M4 0h2v86H4z" fill="#050505" /></pattern></defs>
          <rect width="100%" height="86" fill="#1c1c1c" /><rect width="972" height="86" fill="url(#bars)" /><rect x="1" width="4" height="86" fill="#f7f727" />
        </svg>
      </div>
      <svg width="100%" height="6" viewBox="0 0 988 6" className="shrink-0" aria-hidden="true">
        <path d={levelTicks.map((_, i) => `M${Math.round(3 + i * 13.455)} 0h1v${i % 3 ? 3 : 6}h-1z`).join("")} fill="#8a8a8a" stroke="#8a8a8a" strokeWidth="0.500" />
      </svg>
      <div className="flex text-[14px] leading-5 text-[#8a8a8a]">
        <span className="w-[24px] shrink-0">dB</span>
        {levelMarks.map((m) => <span key={m} className="min-w-0 flex-1 text-center">{m}</span>)}
      </div>
    </section>
  );
}

function Selection() {
  return (
    <section className="w-[415px] shrink-0 bg-[#232323] pl-[16px] pr-[41px]">
      <h2 className="flex h-[43px] items-center gap-[15px] pb-px pl-[2px] text-[#bababa]">Selection/View <Burger /></h2>
      <table className="w-full table-fixed text-left text-[#8a8a8a]">
        <thead><tr className="h-[28px]"><td className="w-[78px]" /><th className="w-[108px] font-normal">Start</th><th className="w-[104px] font-normal">End</th><th className="font-normal">Duration</th></tr></thead>
        <tbody>
          <tr className="h-[30px]"><th className="font-normal">Selection</th><td className="text-[#2d8ceb]">2:00:02.564</td><td className="text-[#2d8ceb]">2:00:02.564</td><td className="text-[#2d8ceb]">0:00.000</td></tr>
          <tr className="h-[34px]"><th className="font-normal">View</th><td className="text-[#2d8ceb]">1:56:35.640</td><td className="text-[#2d8ceb]">2:02:35.568</td><td className="text-[#2d8ceb]">5:59.927</td></tr>
        </tbody>
      </table>
    </section>
  );
}

function StatusBar() {
  return (
    <footer className="mt-[3px] flex h-[30px] shrink-0 items-center bg-[#232323] pl-[12px] pr-[72px] text-[#8a8a8a]">
      <span>Recovery Data Auto Save completed in 0.01 seconds</span>
      <div className="ml-auto flex items-center">
        <span className="h-[17px] w-[74px] border-l border-[#303030]" />
        <span className="h-[17px] w-[157px] border-l border-[#303030]" />
        <span className="w-[218px] border-l border-[#303030] pl-[13px] leading-5">44100 Hz <span className="px-px font-['DejaVu_Sans',sans-serif] text-[13px]">●</span> 32-bit Mixing</span>
        <span className="w-[91px] border-l border-[#303030] pl-[13px] leading-5">1.19 GB</span>
        <span className="w-[108px] border-l border-[#303030] pl-[13px] leading-5">2:40:59.147</span>
        <span className="w-[123px] border-x border-[#303030] pl-[13px] leading-5">91.89 GB free</span>
      </div>
    </footer>
  );
}

/* ---------- taskbar ---------- */

function TaskButton({ label, children, line, className = "w-[61px]" }: { label: string; children: React.ReactNode; line?: boolean; className?: string }) {
  return <button aria-label={label} className={"flex h-full items-center justify-center border-b-3 pt-[3px] " + (line ? "border-[#76b0e4] " : "border-transparent ") + className}>{children}</button>;
}

function Taskbar() {
  return (
    <div className="flex h-[60px] shrink-0 items-center bg-[linear-gradient(90deg,#373737_0,#373737_1260px,#17233a_1330px,#0b1530_1500px,#0a1024_100%)] font-['Noto_Sans',sans-serif] text-[17px] leading-6 text-white">
      <button aria-label="Start" className="flex h-full w-[72px] items-center justify-center bg-[#0f1b33]"><Icon w={24} h={24}><path d="M0 3l10-1.500V11H0zM11.500 1.300L24 0v11H11.500zM0 12.500h10V22L0 21zM11.500 12.500H24V24l-12.500-1.500z" fill="#fff" stroke="none" /></Icon></button>
      <label className="flex h-full w-[516px] items-center bg-[#f2f2f2] pl-[13px] pr-[22px] text-[#333]">
        <span className="h-[33px] w-[33px] rounded-full border-4 border-black" />
        <input aria-label="Search" placeholder="Type here to search" className="ml-[14px] w-0 flex-1 bg-transparent text-[20px] outline-none placeholder:text-[#3a3a3a]" />
        <Icon w={17} h={26} className="text-[#222]"><rect x="5" y="1" width="8" height="15" rx="1" strokeWidth="1.600" /><path d="M1 11v5q0 4 4 4h8q3 0 3-4v-5M9 20v5M5 25h8" strokeWidth="1.600" /></Icon>
      </label>
      <div className="flex h-full items-center gap-[14px]">
        <TaskButton label="Task view" className="w-[69px]"><Icon w={25} h={24}><path d="M1 0v4h15V0M1 8h15v10H1zM1 24v-4h15v4M23 0v5M23 11v13" strokeWidth="1.300" /><path d="M21 6h4v4h-4z" fill="#fff" stroke="none" /></Icon></TaskButton>
        <TaskButton label="Snipping tool" line><Icon w={36} h={36}><ellipse cx="15" cy="20" rx="14" ry="6" transform="rotate(-14 15 20)" fill="#a79a9c" stroke="#7c4a4a" strokeWidth="1" /><ellipse cx="17" cy="10" rx="15" ry="8" transform="rotate(-16 17 10)" fill="#f6f6f6" stroke="#c33" strokeWidth="1.500" /><path d="M6 8l14 10M17 3l4 17" stroke="#8f8f8f" /><ellipse cx="28" cy="23" rx="7" ry="4" transform="rotate(25 28 23)" stroke="#2f86b5" strokeWidth="2.500" /><ellipse cx="22" cy="28" rx="4" ry="7" stroke="#2f86b5" strokeWidth="2.500" /></Icon></TaskButton>
        <TaskButton label="Edge"><Icon w={32} h={34}><path d="M0 14C2 5 8 0 16 0c9 0 15 7 15 15v4H10c0 6 5 8 10 8 3 0 7-1 9-2v6c-3 2-7 3-11 3C9 34 4 28 4 21c0-6 3-10 8-13C7 9 3 11 0 14zm10-1h12c0-4-2-6-6-6-3 0-5 2-6 6z" fill="#0c78d4" stroke="none" /></Icon></TaskButton>
        <TaskButton label="File Explorer" line><Icon w={33} h={28}><path d="M0 0h13l2 3h18v23H0z" fill="#fbe08c" stroke="none" /><path d="M0 0h13l2 3-2 3H0z" fill="#efc02c" stroke="none" /><path d="M6 27V16q0-3 3-3h15q3 0 3 3v11h-5v-8H11v8z" fill="#3eaee0" stroke="none" /></Icon></TaskButton>
        <TaskButton label="Chrome" line><Icon w={34} h={34}><circle cx="17" cy="17" r="17" fill="#ffcd40" stroke="none" /><path d="M2.300 8.500A17 17 0 0 0 15 33.900L23 22l-6-5z" fill="#1fa15d" stroke="none" /><path d="M2.300 8.500A17 17 0 0 1 32.500 10H17l-7 11z" fill="#dd4b3e" stroke="none" /><circle cx="17" cy="17" r="7.800" fill="#fff" stroke="none" /><circle cx="17" cy="17" r="6" fill="#4a8af4" stroke="none" /></Icon></TaskButton>
        <TaskButton label="OneNote" line><Icon w={36} h={34}><path d="M9 1h26v32H9z" fill="#c463e6" stroke="none" /><path d="M27 9h8v8h-8z" fill="#a44bd0" stroke="none" /><path d="M27 17h8v8h-8z" fill="#8a2fbf" stroke="none" /><path d="M27 25h8v8h-8z" fill="#6e1aa5" stroke="none" /><path d="M0 8h18v18H0z" fill="#7719aa" stroke="none" /><text x="9" y="22" textAnchor="middle" fontSize="14" fontWeight="700" fill="#fff" stroke="none">N</text></Icon></TaskButton>
        <TaskButton label="Trello" line><Icon w={36} h={36}><path d="M0 0h36v36H0z" fill="#0079bf" stroke="none" /><rect x="9" y="9" width="18" height="18" rx="2" fill="#fff" stroke="none" /><path d="M12 12h5v12h-5zM19 12h5v7h-5z" fill="#0079bf" stroke="none" /></Icon></TaskButton>
        <TaskButton label="GIMP"><Icon w={34} h={26}><path d="M27 1q3 8 0 13c-3 6-10 7-17 5-4-1-7-5-7-10 2-3 6-3 10-1 6 2 10 0 14-7z" fill="#6b675c" stroke="none" /><circle cx="3.500" cy="11" r="3.500" fill="#0a0a0a" stroke="none" /><circle cx="10" cy="9" r="3.500" fill="#eee" stroke="none" /><circle cx="16" cy="9" r="3.500" fill="#eee" stroke="none" /><circle cx="10" cy="9" r="1.500" fill="#111" stroke="none" /><circle cx="16" cy="9" r="1.500" fill="#111" stroke="none" /><path d="M18 16l10 5" stroke="#e08a2c" strokeWidth="2.500" /><path d="M28 20l5 5" stroke="#ddd" strokeWidth="3" /></Icon></TaskButton>
      </div>
      <TaskButton label="Audition" line className="ml-2 w-[73px] bg-[#696969]"><span className="flex h-[32px] w-[34px] items-center justify-center border-2 border-[#2bd4b0] bg-[#00241e] text-[18px] leading-none text-[#2bd4b0]">Au</span></TaskButton>
      <TaskButton label="Word" line className="ml-2 w-[61px]"><Icon w={36} h={34}><path d="M9 1h26v8H9z" fill="#41a5ee" stroke="none" /><path d="M9 9h26v8H9z" fill="#2b7cd3" stroke="none" /><path d="M9 17h26v8H9z" fill="#185abd" stroke="none" /><path d="M9 25h26v8H9z" fill="#103f91" stroke="none" /><path d="M0 8h18v18H0z" fill="#185abd" stroke="none" /><text x="9" y="22" textAnchor="middle" fontSize="13" fontWeight="700" fill="#fff" stroke="none">W</text></Icon></TaskButton>
      <TaskButton label="Paint" line className="ml-[14px] w-[61px]"><Icon w={36} h={36}><path d="M16 6c9-2 17 3 16 12 0 9-5 15-12 14-5-1-3-5-6-7-4-2-9 2-12-1C-2 16 7 7 16 6z" fill="#e9eef3" stroke="none" /><circle cx="7" cy="18" r="3" fill="#e0483a" stroke="none" /><circle cx="12" cy="12" r="3" fill="#7db63a" stroke="none" /><circle cx="19" cy="10" r="3" fill="#e7b23b" stroke="none" /><circle cx="14" cy="22" r="2.500" fill="#22304a" stroke="none" /><path d="M31 4L19 33" stroke="#d88c35" strokeWidth="3" /><path d="M27 1l8 2-5 8z" fill="#b98a58" stroke="none" /></Icon></TaskButton>
      <div className="ml-auto flex h-full items-center">
        <button aria-label="People"><Icon w={22} h={24}><circle cx="15" cy="5" r="4" strokeWidth="1.600" /><circle cx="7" cy="13" r="3.500" strokeWidth="1.600" /><path d="M10 12q3-4 6-3 4 1 5 6M1 23q0-6 6-6 5 0 5 6" strokeWidth="1.600" /></Icon></button>
        <button aria-label="Hidden icons" className="ml-[40px]"><Icon w={18} h={11}><path d="M1 10l8-8 8 8" strokeWidth="1.600" /></Icon></button>
        <button aria-label="Ink" className="ml-[35px]"><Icon w={22} h={22}><path d="M9 15L16 2q3-2 4 1l-8 14-4 3zM10 11H4q-4 1-2 4h3q-6 1-3 5 3 2 6-1M14 13h4q4-1 2-4h-3" strokeWidth="1.400" /></Icon></button>
        <button className="ml-[28px] w-[34px]">ENG</button>
        <button className="ml-[20px] w-[94px] text-center leading-7"><span className="block">2:35 PM</span><span className="block">20/11/2019</span></button>
        <button aria-label="Notifications" className="relative ml-[27px] mr-[17px] h-[36px] w-[38px]">
          <Icon w={25} h={28}><path d="M0 0h25v23h-7l-6 5v-5H0z" fill="#fff" stroke="none" /><path d="M5 7h15M5 11h15M5 15h11" stroke="#0a1024" strokeWidth="1.600" /></Icon>
          <span className="absolute right-0 bottom-[-5px] flex h-[25px] w-[25px] items-center justify-center rounded-full border border-[#8a8a8a] bg-[#2b2b30] text-[15px] leading-none">8</span>
        </button>
      </div>
      <div className="h-full w-[8px] border-l-2 border-[#5a6074]" />
    </div>
  );
}

export default function App() {
  return (
    <div className="flex min-h-screen flex-col overflow-hidden bg-[#161616] font-['Noto_Sans_CJK_SC',sans-serif] text-[16px] leading-6">
      <TitleBar />
      <Toolbar />
      <main className="mt-1 flex flex-1 items-stretch gap-[6px] px-[2px]">
        <aside className="flex w-[483px] shrink-0 flex-col gap-[7px]">
          <Properties />
          <Files />
        </aside>
        <div className="flex min-w-0 flex-1 flex-col gap-[5px]">
          <Editor />
          <div className="flex min-h-0 flex-1 gap-[7px]">
            <Levels />
            <Selection />
          </div>
        </div>
      </main>
      <StatusBar />
      <Taskbar />
    </div>
  );
}
